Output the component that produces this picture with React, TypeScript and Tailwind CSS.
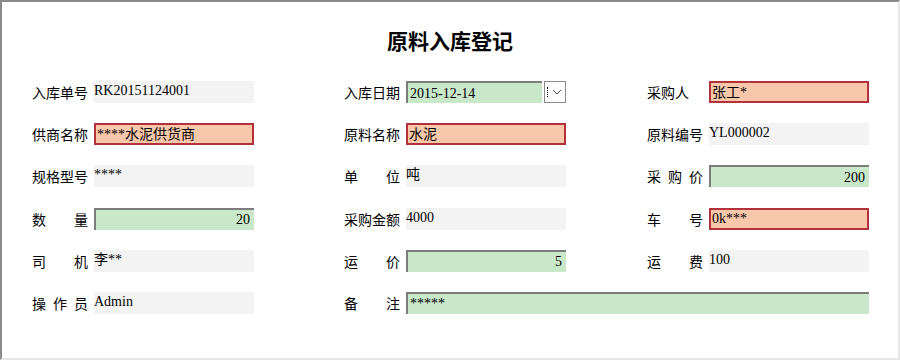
import React from "react";

const cjk = "font-['Noto_Sans_CJK_SC',sans-serif]";
const val = "font-['Liberation_Serif','Noto_Sans_CJK_SC',serif]";

type Kind = "gray" | "green" | "red";

function Label({ text, spread = true }: { text: string; spread?: boolean }) {
  const chars = text.split("");
  return (
    <div className={`flex w-[56px] shrink-0 justify-between text-[14px] leading-[22px] text-black ${cjk}`}>
      {chars.length === 4 || !spread ? <span>{text}</span> : chars.map((c, i) => <span key={i}>{c}</span>)}
    </div>
  );
}

function Field({
  kind,
  value,
  right,
  width = "w-[160px]",
}: {
  kind: Kind;
  value: string;
  right?: boolean;
  width?: string;
}) {
  if (kind === "gray") {
    return (
      <div className={`h-[22px] ${width} shrink-0 bg-[#f3f3f3] pt-px text-[14px] leading-[17px] text-black ${val}`}>
        {value}
      </div>
    );
  }
  if (kind === "green") {
    return (
      <div
        className={`flex h-[22px] ${width} shrink-0 items-center border-t-2 border-l-2 border-[#7c7c7c] bg-[#c9e7c9] px-[2px] text-[14px] text-black ${val} ${
          right ? "justify-end pr-[4px]" : ""
        }`}
      >
        {value}
      </div>
    );
  }
  return (
    <div
      className={`flex h-[22px] ${width} shrink-0 items-center border-2 border-[#b3313a] bg-[#f9c8aa] pl-[1px] text-[14px] text-black ${val}`}
    >
      {value}
    </div>
  );
}

function Cell({ label, spread, children }: { label: string; spread?: boolean; children: React.ReactNode }) {
  return (
    <div className="flex h-[22px] items-center gap-[6px]">
      <Label text={label} spread={spread} />
      {children}
    </div>
  );
}

export default function App() {
  return (
    <div className="box-border h-[360px] w-[900px] border-t-2 border-l-2 border-r-2 border-b-2 border-t-[#8a8a8a] border-l-[#8a8a8a] border-r-[#e6e6e6] border-b-[#e6e6e6] bg-white">
      <div className="pt-[26px] text-center">
        <h1 className={`text-[21px] leading-[24px] font-bold text-black ${cjk}`}>原料入库登记</h1>
      </div>

      <div className="mt-[29px] grid grid-cols-[312px_303px_222px] gap-y-[20.2px] pl-[30px]">
        <Cell label="入库单号">
          <Field kind="gray" value="RK20151124001" />
        </Cell>
        <Cell label="入库日期">
          <div className="flex items-center gap-[2px]">
            <Field kind="green" value="2015-12-14" width="w-[136px]" />
            <div className="flex h-[22px] w-[22px] items-center border border-[#8c8c8c] bg-white">
              <span className="ml-[2px] h-[10px] border-l border-dotted border-black" />
              <svg width="10" height="6" viewBox="0 0 10 6" className="ml-[4px]">
                <path d="M1 1 L5 5 L9 1" fill="none" stroke="#444" strokeWidth="1" />
              </svg>
            </div>
          </div>
        </Cell>
        <Cell label="采购人" spread={false}>
          <Field kind="red" value="张工*" />
        </Cell>

        <Cell label="供商名称">
          <Field kind="red" value="****水泥供货商" />
        </Cell>
        <Cell label="原料名称">
          <Field kind="red" value="水泥" />
        </Cell>
        <Cell label="原料编号">
          <Field kind="gray" value="YL000002" />
        </Cell>

        <Cell label="规格型号">
          <Field kind="gray" value="****" />
        </Cell>
        <Cell label="单位">
          <Field kind="gray" value="吨" />
        </Cell>
        <Cell label="采购价">
          <Field kind="green" value="200" right />
        </Cell>

        <Cell label="数量">
          <Field kind="green" value="20" right />
        </Cell>
        <Cell label="采购金额">
          <Field kind="gray" value="4000" />
        </Cell>
        <Cell label="车号">
          <Field kind="red" value="0k***" />
        </Cell>

        <Cell label="司机">
          <Field kind="gray" value="李**" />
        </Cell>
        <Cell label="运价">
          <Field kind="green" value="5" right />
        </Cell>
        <Cell label="运费">
          <Field kind="gray" value="100" />
        </Cell>

        <Cell label="操作员">
          <Field kind="gray" value="Admin" />
        </Cell>
        <div className="col-span-2">
          <Cell label="备注">
            <Field kind="green" value="*****" width="w-[463px]" />
          </Cell>
        </div>
      </div>
    </div>
  );
}
